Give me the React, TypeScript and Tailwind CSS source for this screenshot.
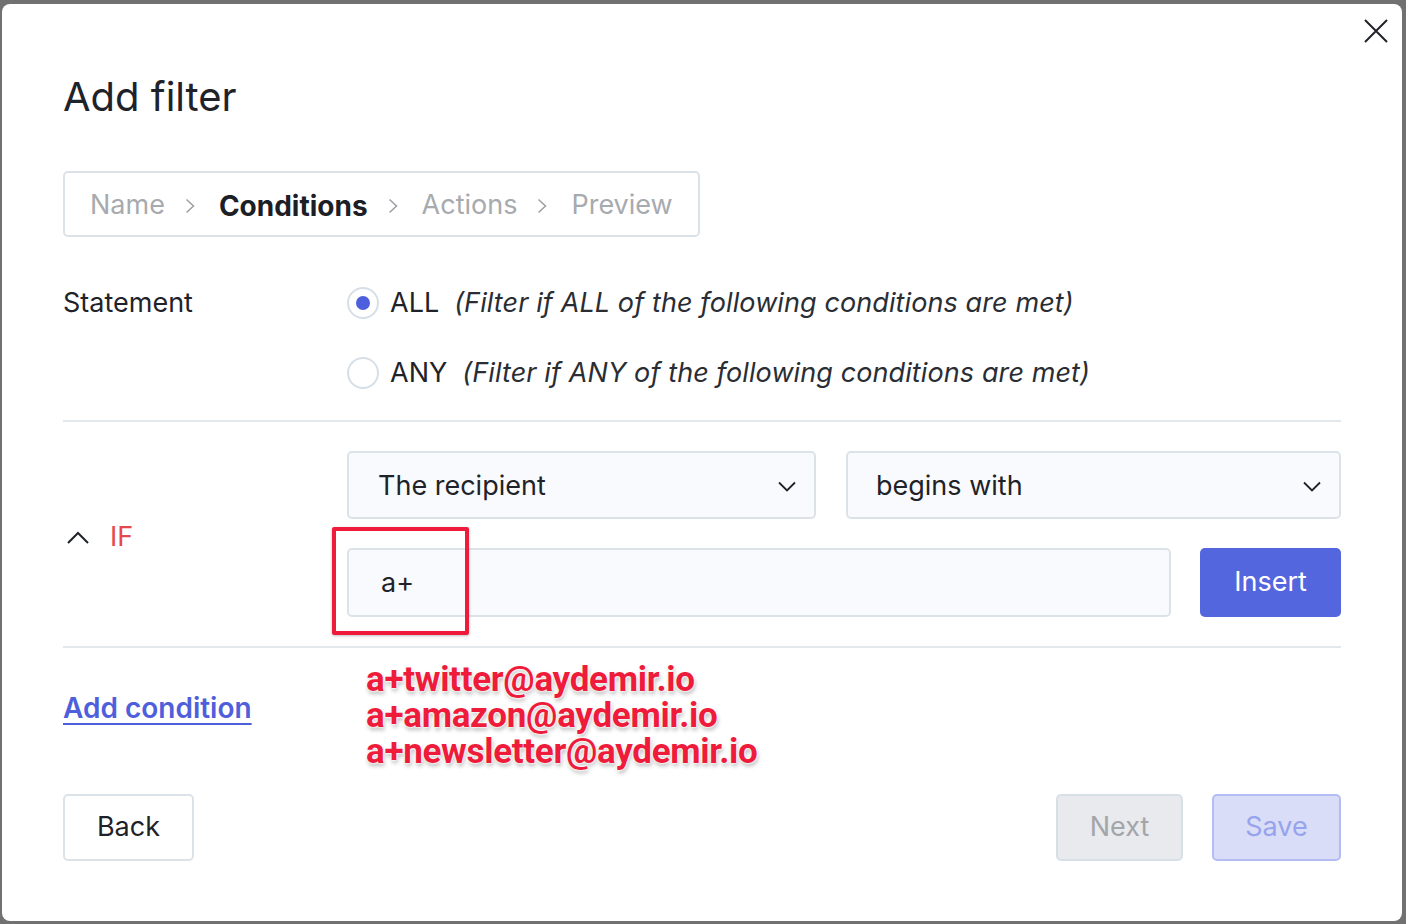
import React, { useState } from 'react';

const font = { fontFamily: 'Inter, "Noto Sans", sans-serif' };

const Crumb = ({ label, active }: { label: string; active?: boolean }) => (
  <span className={active ? 'text-[28px] font-bold text-[#1c2026]' : 'text-[27px] text-[#a7aaae]'}>{label}</span>
);

const CrumbArrow = () => (
  <svg width="11" height="16" viewBox="0 0 11 16" className="ml-[20px] mr-[23px]">
    <path d="M1.5 1.5 L8.5 8 L1.5 14.5" fill="none" stroke="#9ea2a7" strokeWidth="1.6" />
  </svg>
);

const SelectChevron = () => (
  <svg width="18" height="11" viewBox="0 0 18 11">
    <path d="M1 1.5 L9 9.5 L17 1.5" fill="none" stroke="#1f2329" strokeWidth="1.8" />
  </svg>
);

const Radio = ({ checked, onClick }: { checked: boolean; onClick: () => void }) => (
  <button
    onClick={onClick}
    className="w-[32px] h-[32px] rounded-full border-2 border-[#d6dfe7] bg-white flex items-center justify-center shrink-0"
  >
    {checked && <span className="w-[14px] h-[14px] rounded-full bg-[#4d5fdc]" />}
  </button>
);

export default function App() {
  const [mode, setMode] = useState<'all' | 'any'>('all');

  return (
    <div className="h-[924px] bg-[#717171] pt-[4px] pl-[2px] overflow-hidden" style={font}>
      <div className="relative w-[1400px] h-[917px] bg-white rounded-[8px] px-[61px] pt-[69px] text-[#1f2329]">
        <button className="absolute top-[15px] right-[14px]">
          <svg width="24" height="24" viewBox="0 0 24 24">
            <path d="M1 1 L23 23 M23 1 L1 23" fill="none" stroke="#1f2329" strokeWidth="2" />
          </svg>
        </button>

        <h1 className="text-[40px] leading-[48px] font-normal">Add filter</h1>

        {/* steps */}
        <div className="mt-[50px] inline-flex items-center h-[66px] px-[25px] pt-[3px] border-2 border-[#dbe3e9] rounded-[5px]">
          <Crumb label="Name" />
          <CrumbArrow />
          <Crumb label="Conditions" active />
          <CrumbArrow />
          <Crumb label="Actions" />
          <CrumbArrow />
          <Crumb label="Preview" />
        </div>

        {/* statement */}
        <div className="flex mt-[46px] pb-[27px] border-b-2 border-[#e3e8ec] text-[27px]">
          <div className="w-[284px] shrink-0 h-[40px] flex items-center">Statement</div>
          <div className="flex flex-col gap-[30px]">
            <div className="flex items-center h-[40px]">
              <Radio checked={mode === 'all'} onClick={() => setMode('all')} />
              <span className="ml-[11px]">ALL</span>
              <span className="ml-[15px] italic tracking-[0.1px] text-[#2a2e34]">(Filter if ALL of the following conditions are met)</span>
            </div>
            <div className="flex items-center h-[40px]">
              <Radio checked={mode === 'any'} onClick={() => setMode('any')} />
              <span className="ml-[11px]">ANY</span>
              <span className="ml-[15px] italic tracking-[0.1px] text-[#2a2e34]">(Filter if ANY of the following conditions are met)</span>
            </div>
          </div>
        </div>

        {/* condition */}
        <div className="flex items-center py-[29px] border-b-2 border-[#e3e8ec] text-[27px]">
          <div className="w-[284px] shrink-0 flex items-center pt-[6px]">
            <svg width="22" height="13" viewBox="0 0 22 13" className="ml-[4px]">
              <path d="M1 12 L11 2 L21 12" fill="none" stroke="#1f2329" strokeWidth="2" />
            </svg>
            <span className="ml-[21px] text-[#e5484d]">IF</span>
          </div>
          <div className="flex-1 flex flex-col gap-[29px]">
            <div className="flex gap-[30px]">
              <div className="w-[469px] h-[68px] flex items-center justify-between pl-[29px] pr-[18px] pt-[2px] bg-[#f9fafd] border-2 border-[#dbe3e9] rounded-[5px]">
                <span>The recipient</span>
                <SelectChevron />
              </div>
              <div className="flex-1 h-[68px] flex items-center justify-between pl-[28px] pr-[18px] pt-[2px] bg-[#f9fafd] border-2 border-[#dbe3e9] rounded-[5px]">
                <span>begins with</span>
                <SelectChevron />
              </div>
            </div>
            <div className="flex gap-[29px]">
              <div className="flex-1 h-[69px] flex items-center pl-[32px] pt-[2px] bg-[#f9fafd] border-2 border-[#dbe3e9] rounded-[5px]">
                a+
              </div>
              <button className="w-[141px] h-[69px] bg-[#5366dd] rounded-[5px] text-white">Insert</button>
            </div>
          </div>
        </div>

        {/* annotation overlays */}
        <div className="absolute left-[330px] top-[523px] w-[137px] h-[108px] border-[4px] border-[#ee1b3a] rounded-[2px] shadow-[0_1px_3px_rgba(0,0,0,0.25)]" />
        <div
          className="absolute left-[364px] top-[658px] text-[35px] leading-[36px] font-bold text-[#ee1b3a] tracking-[-0.3px] [text-shadow:0_0_2px_#fff,0_0_2px_#fff,0_0_3px_#fff,1px_3px_4px_rgba(0,0,0,0.3)]"
          style={{ fontFamily: 'Roboto, "Noto Sans", sans-serif' }}
        >
          <div>a+twitter@aydemir.io</div>
          <div>a+amazon@aydemir.io</div>
          <div>a+newsletter@aydemir.io</div>
        </div>

        <div className="h-[120px] flex items-center">
          <a href="#" className="text-[28px] font-semibold text-[#4f5fdc] underline underline-offset-[5px] decoration-2">
            Add condition
          </a>
        </div>

        {/* footer */}
        <div className="flex items-center justify-between mt-[26px] text-[27px]">
          <button className="w-[131px] h-[67px] border-2 border-[#dbe3e9] rounded-[5px] bg-white">Back</button>
          <div className="flex gap-[29px]">
            <button className="w-[127px] h-[67px] border-2 border-[#d8e0e7] rounded-[5px] bg-[#e9eaee] text-[#a4a5a8]">
              Next
            </button>
            <button className="w-[129px] h-[67px] border-2 border-[#b4bdf3] rounded-[5px] bg-[#d9ddf7] text-[#97a3ec]">
              Save
            </button>
          </div>
        </div>
      </div>
    </div>
  );
}
